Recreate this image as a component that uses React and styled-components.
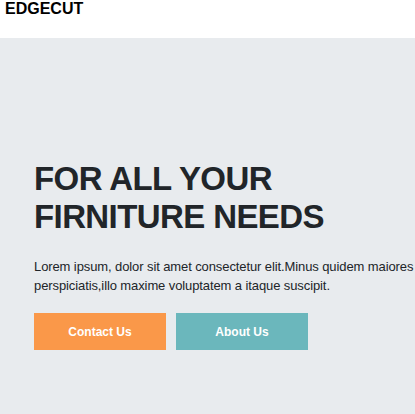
import React from "react";
import styled, { createGlobalStyle } from "styled-components";

const colors = {
	dark: "#212529",
	hero: "#e8ebee",
	orange: "#fa9849",
	teal: "#6bb7bc",
};

const GlobalStyle = createGlobalStyle`
	html, body {
		margin: 0;
		padding: 0;
		background: white;
		overflow: hidden;
	}
	body {
		font-family: "Liberation Sans", Arial, sans-serif;
	}
`;

const Page = styled.div`
	display: flex;
	flex-direction: column;
	height: 414px;
`;

const Navbar = styled.header`
	height: 38px;
	padding: 0 5px;
	background: white;
`;

const Brand = styled.div`
	color: black;
	font-size: 16px;
	font-weight: bold;
	line-height: 18px;
`;

const Hero = styled.section`
	flex: 1;
	background-color: ${colors.hero};
	padding: 122px 0 0 34px;
`;

const Title = styled.h1`
	margin: 0;
	color: ${colors.dark};
	font-size: 33px;
	line-height: 38px;
	letter-spacing: -0.6px;
	font-weight: bold;
`;

const Text = styled.p`
	width: 400px;
	margin: 21px 0 18px;
	color: ${colors.dark};
	font-size: 13px;
	line-height: 19px;
	letter-spacing: -0.1px;
`;

const Buttons = styled.div`
	display: flex;
	gap: 10px;
`;

const Button = styled.button`
	width: 132px;
	height: 37px;
	padding: 0;
	border: none;
	background-color: ${props => props.color};
	color: white;
	font-family: "Liberation Sans", Arial, sans-serif;
	font-size: 12px;
	font-weight: bold;
	cursor: pointer;
`;

const App = () => {
	return (
		<Page>
			<GlobalStyle />
			<Navbar>
				<Brand>EDGECUT</Brand>
			</Navbar>
			<Hero>
				<Title>
					FOR ALL YOUR
					<br />
					FIRNITURE NEEDS
				</Title>
				<Text>
					Lorem ipsum, dolor sit amet consectetur elit.Minus quidem maiores perspiciatis,illo maxime voluptatem a itaque suscipit.
				</Text>
				<Buttons>
					<Button color={colors.orange}>Contact Us</Button>
					<Button color={colors.teal}>About Us</Button>
				</Buttons>
			</Hero>
		</Page>
	);
};

export default App;
